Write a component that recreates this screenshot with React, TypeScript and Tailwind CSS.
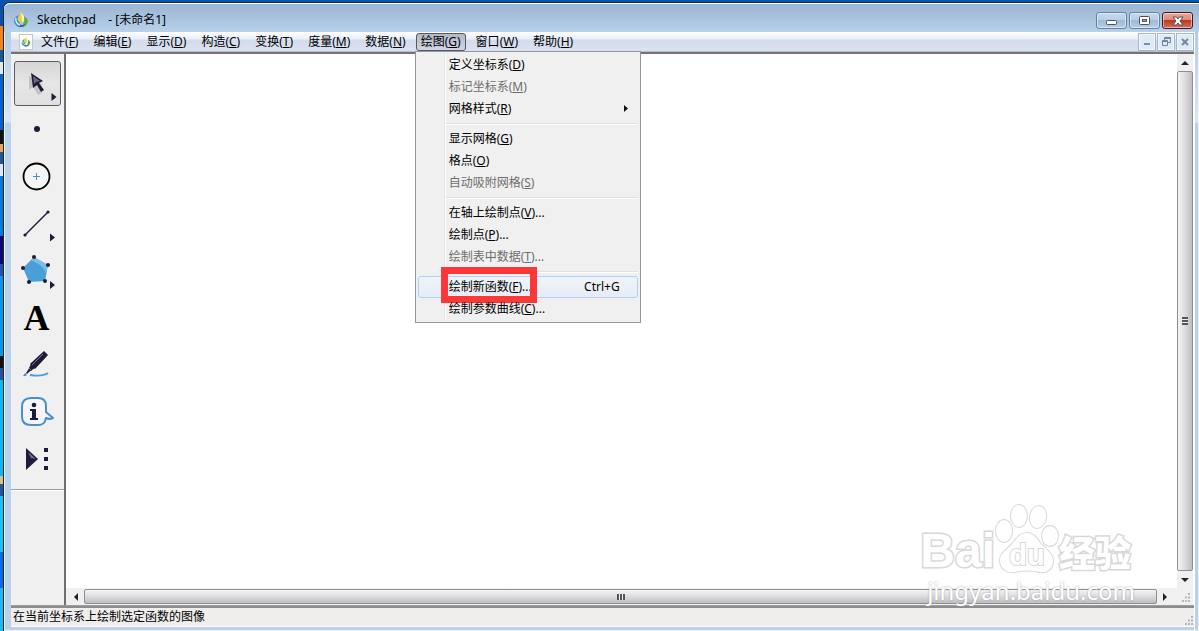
import type { ReactNode } from "react";

interface MenuEntry {
  label: string;
  hotkey: string;
  more?: boolean;
  disabled?: boolean;
  submenu?: boolean;
  shortcut?: string;
  marked?: boolean;
}

const menus = [
  ["文件", "F"],
  ["编辑", "E"],
  ["显示", "D"],
  ["构造", "C"],
  ["变换", "T"],
  ["度量", "M"],
  ["数据", "N"],
  ["绘图", "G"],
  ["窗口", "W"],
  ["帮助", "H"],
];

const graphMenu: MenuEntry[][] = [
  [
    { label: "定义坐标系", hotkey: "D" },
    { label: "标记坐标系", hotkey: "M", disabled: true },
    { label: "网格样式", hotkey: "R", submenu: true },
  ],
  [
    { label: "显示网格", hotkey: "G" },
    { label: "格点", hotkey: "O" },
    { label: "自动吸附网格", hotkey: "S", disabled: true },
  ],
  [
    { label: "在轴上绘制点", hotkey: "V", more: true },
    { label: "绘制点", hotkey: "P", more: true },
    { label: "绘制表中数据", hotkey: "T", more: true, disabled: true },
  ],
  [
    {
      label: "绘制新函数",
      hotkey: "F",
      more: true,
      shortcut: "Ctrl+G",
      marked: true,
    },
    { label: "绘制参数曲线", hotkey: "C", more: true },
  ],
];

// slivers of the desktop that show left of the window
const desktop = [
  "h-[26px] bg-[#0a50a8]",
  "h-6 bg-[#f58220]",
  "h-3 bg-[#1c5799]",
  "h-3 bg-[#dfe9f5]",
  "h-14 bg-[#0b60c8]",
  "h-[14px] bg-[#101010]",
  "h-2 bg-[#e8a35c]",
  "h-3 bg-[#22559c]",
  "h-3 bg-[#dfe9f5]",
  "h-[60px] bg-[#0879dc]",
  "h-7 bg-[#0a0a6e]",
  "h-3 bg-[#22559c]",
  "h-20 bg-[#0a95ea]",
  "h-3 bg-[#101010]",
  "h-3 bg-[#22559c]",
  "h-24 bg-[#12b4f2]",
  "h-2 bg-[#d9c08a]",
  "h-3 bg-[#22559c]",
  "h-14 bg-[#20c0f5]",
  "h-9 bg-[#0868f0]",
  "flex-1 bg-[#20b8f2]",
];

function Logo({ className }: { className: string }) {
  return (
    <svg viewBox="0 0 16 16" className={className} aria-hidden="true">
      <path d="M6 3C3 4 1 6 1 9c0 3 3 6 7 6L6 9z" fill="#3d8fc4" />
      <path d="M8 0C6 4 4 5 5 8c1 2 3 3 5 2 0-4 0-7-2-10z" fill="#e9cf4a" />
      <path d="M8 0c3 4 4 6 3 9l-2 1C9 7 9 4 8 0z" fill="#fff8b8" />
      <path d="M11 4c3 2 4 4 4 6-1 3-4 5-7 5 2-2 4-5 3-11z" fill="#62a84f" />
      <path d="M4 10c2 3 6 4 9 2-1 2-3 3-5 3-3 0-4-2-4-5z" fill="#2467a8" />
      <path d="M3 6c-1 3 1 6 4 7" stroke="#cdeef8" strokeWidth="1.500" fill="none" />
    </svg>
  );
}

function Hotkey({ entry }: { entry: MenuEntry }) {
  return (
    <span>
      {entry.label}(<u>{entry.hotkey}</u>){entry.more && "..."}
    </span>
  );
}

function MenuRow({ entry }: { entry: MenuEntry }) {
  const state = entry.marked
    ? "border-[#aecff7] bg-linear-to-b from-[#f0f3f8] to-[#e6ecf5]"
    : "border-transparent";
  return (
    <li role="none" className="relative">
      <button
        role="menuitem"
        disabled={entry.disabled}
        className={`flex h-[22px] w-full items-center justify-between rounded-[3px] border pr-[17px] pl-[30px] text-left disabled:text-[#6d6d6d] ${state}`}
      >
        <Hotkey entry={entry} />
        {entry.shortcut && <span>{entry.shortcut}</span>}
        {entry.submenu && (
          <svg viewBox="0 0 4 7" className="-mr-2 h-[7px] w-1">
            <path d="M0 0l4 3.500-4 3.500z" fill="#111" />
          </svg>
        )}
      </button>
      {entry.marked && (
        <span className="pointer-events-none absolute -top-[9px] left-[23px] h-9 w-24 border-[7px] border-[#fb3737]" />
      )}
    </li>
  );
}

function GraphMenu() {
  return (
    <div
      role="menu"
      aria-label="绘图"
      className="absolute top-full -left-px z-20 w-[226px] border border-[#979797] bg-[#f0f0f0] p-0.5"
    >
      <span className="absolute inset-y-0.5 left-7 w-0.5 border-l border-[#e2e3e3] bg-white" />
      {graphMenu.map((group, i) => (
        <ul
          key={i}
          role="group"
          className={
            i > 0
              ? "relative pt-2 before:absolute before:top-[3px] before:right-0 before:left-7 before:h-0.5 before:border-t before:border-[#e0e0e0] before:bg-white"
              : "relative"
          }
        >
          {group.map((entry) => (
            <MenuRow key={entry.label} entry={entry} />
          ))}
        </ul>
      ))}
    </div>
  );
}

function CaptionButton({
  label,
  danger,
  children,
}: {
  label: string;
  danger?: boolean;
  children: ReactNode;
}) {
  const look = danger
    ? "border-[#4d1220] bg-[linear-gradient(#e9a99d,#dc8a7a_45%,#b93a22_50%,#d0705a)]"
    : "border-[#66809f] bg-[linear-gradient(#c5d8eb,#b8cfe6_45%,#9dbad6_50%,#b4cfe8)]";
  return (
    <button
      aria-label={label}
      className={`flex h-[17px] w-[31px] items-center justify-center rounded-[3px] border inset-ring inset-ring-white/50 ${look}`}
    >
      {children}
    </button>
  );
}

function ChildButton({
  label,
  children,
}: {
  label: string;
  children: ReactNode;
}) {
  return (
    <button
      aria-label={label}
      className="flex h-[18px] w-[18px] items-center justify-center border border-[#a5b4c6] bg-[#dfeaf7] inset-ring inset-ring-white/60"
    >
      {children}
    </button>
  );
}

function Cross({ className, fill }: { className: string; fill: string }) {
  return (
    <svg viewBox="0 0 12 10" className={className}>
      <path
        d="M1 1h3.500l1.500 2 1.500-2H11L8 5l3 4H7.500L6 7 4.500 9H1l3-4z"
        fill={fill}
        stroke="#50505f"
      />
    </svg>
  );
}

const tools: { name: string; art: ReactNode }[] = [
  {
    name: "移动箭头工具",
    art: (
      <>
        <path d="M15 15v14l4-3 5 8 4-2-4-7 5-1z" fill="#000" opacity=".15" />
        <path d="M17 12l2 15 4-3 4 7 3-2-5-7 4-2z" fill="#201a3a" />
        <path d="M19 15l7 5-4 1-2 2z" fill="#6b6680" />
        <path d="M37.500 32l5 4-5 4z" fill="#201a3a" />
      </>
    ),
  },
  { name: "点工具", art: <circle cx="23" cy="21" r="3" fill="#201a3a" /> },
  {
    name: "圆工具",
    art: (
      <>
        <circle cx="22.500" cy="21.500" r="13" fill="#f5f5f5" stroke="#000" strokeWidth="1.800" />
        <path d="M22.500 18v7M19 21.500h7" stroke="#3c92cf" />
      </>
    ),
  },
  {
    name: "线段直尺工具",
    art: (
      <>
        <path d="M11 33L34 10" stroke="#201a3a" strokeWidth="1.400" />
        <circle cx="11" cy="33" r="1.600" fill="#201a3a" />
        <circle cx="34" cy="10" r="1.600" fill="#201a3a" />
        <path d="M36 31.500l5 4-5 4z" fill="#201a3a" />
      </>
    ),
  },
  {
    name: "多边形工具",
    art: (
      <>
        <path d="M20 8l14 8-3 16-16 1L9 19z" fill="#4a9fd6" />
        <path d="M20 8l14 8-2 8c-2-6-7-9-15-13z" fill="#9bd0f0" opacity=".6" />
        <g fill="#201a3a">
          <circle cx="20" cy="8" r="2" />
          <circle cx="34" cy="16" r="2" />
          <circle cx="31" cy="32" r="2" />
          <circle cx="15" cy="33" r="2" />
          <circle cx="9" cy="19" r="2" />
          <path d="M36 32l5 4-5 4z" />
        </g>
      </>
    ),
  },
  {
    name: "文本工具",
    art: null,
  },
  {
    name: "标记工具",
    art: (
      <>
        <path d="M30 9l3 3-12 13-6 4-2 2-1-1 2-3 3-6z" fill="#201a3a" />
        <path d="M30 9l3 3-12 13-4-4z" fill="#201a3a" stroke="#201a3a" strokeWidth="1.500" />
        <path d="M29 11L18 22M15 25l3 3" stroke="#7d7891" />
        <path d="M9 33l2-3 2 2c-1 1-2 1-4 1z" fill="#3c92cf" />
        <path d="M16 32c7 1 14 1 18-2" fill="none" stroke="#4a9fd6" strokeWidth="1.800" />
      </>
    ),
  },
  {
    name: "信息工具",
    art: (
      <>
        <path
          d="M17 8h7c6 0 8 3 8 8v6l7 6c-2 1-5 1-7 0-1 5-3 7-8 7h-7c-6 0-9-3-9-8V17c0-6 3-9 9-9z"
          fill="#f5f5f5"
          stroke="#4590cd"
          strokeWidth="2"
          strokeLinejoin="round"
        />
        <circle cx="20" cy="15" r="2.300" fill="#201a3a" />
        <path d="M16 19h6v9h2v2h-8v-2h2v-7h-2z" fill="#201a3a" />
      </>
    ),
  },
  {
    name: "自定义工具",
    art: (
      <>
        <path d="M12 11l12 11-12 11z" fill="#201a3a" />
        <path d="M14 15l8 7-5-1z" fill="#77718a" />
        <path d="M30 11h4v4h-4zM30 20h4v4h-4zM30 29h4v4h-4z" fill="#201a3a" />
      </>
    ),
  },
];

function Toolbox() {
  return (
    <aside className="w-[55px] shrink-0 border-r-2 border-[#6f6f6f] bg-[#f0f0f0]">
      <div className="flex flex-col gap-0.5 border-b border-[#9d9d9d] px-[3px] py-[7px] shadow-[0_1px_0_#ffffff]">
        {tools.map((tool, i) => (
          <button
            key={tool.name}
            aria-label={tool.name}
            className={`flex h-[45px] w-[47px] items-center justify-center rounded-[3px] border ${
              i === 0
                ? "border-[#5c5c5c] bg-linear-to-b from-[#d6d6d6] via-[#e6e6e6] to-[#e0e0e0]"
                : "border-transparent"
            }`}
          >
            {tool.art ? (
              <svg viewBox="1 1 45 43" fill="none" className="h-[43px] w-[45px]">
                {tool.art}
              </svg>
            ) : (
              <span className="pr-0.5 pb-0.5 font-['Liberation_Serif',serif] text-[36px] leading-none font-bold text-black">
                A
              </span>
            )}
          </button>
        ))}
      </div>
    </aside>
  );
}

function Arrow({ d, label }: { d: string; label: string }) {
  return (
    <button
      aria-label={label}
      className="flex h-[17px] w-4 shrink-0 items-center justify-center"
    >
      <svg viewBox="0 0 8 8" className="h-2 w-2">
        <path d={d} fill="#222" />
      </svg>
    </button>
  );
}

function Grip() {
  return (
    <svg viewBox="0 0 10 10" className="h-2.5 w-2.5" aria-hidden="true">
      <path
        d="M7 0h2v2H7zM4 3.500h2v2H4zM7 3.500h2v2H7zM1 7h2v2H1zM4 7h2v2H4zM7 7h2v2H7z"
        fill="#b8b8b8"
      />
    </svg>
  );
}

function Watermark() {
  return (
    <div className="pointer-events-none absolute right-16 bottom-6 z-10 flex flex-col items-end">
      <div className="flex items-end pr-1 text-white [-webkit-text-stroke:3px_#d8d8d8] [paint-order:stroke]">
        <span className="font-['Liberation_Sans',sans-serif] text-[48px] leading-[48px] font-bold">
          Bai
        </span>
        <svg viewBox="0 0 64 72" className="h-[72px] w-16">
          <g fill="#fff" stroke="#d8d8d8" strokeWidth="2">
            <ellipse cx="9" cy="28" rx="8" ry="11" />
            <ellipse cx="24" cy="13" rx="8" ry="11" />
            <ellipse cx="43" cy="14" rx="8" ry="11" transform="rotate(10 43 14)" />
            <ellipse cx="55" cy="33" rx="8" ry="10" />
            <path d="M32 30c7 0 10 6 14 11 6 6 13 11 12 18-1 8-7 11-13 10-9-2-17-2-25 0-8 1-15-3-15-12 0-7 8-11 13-17 4-5 7-10 14-10z" />
            <text
              x="32"
              y="62"
              textAnchor="middle"
              fontFamily="Liberation Sans"
              fontSize="29"
              fontWeight="700"
            >
              du
            </text>
          </g>
        </svg>
        <span className="text-[36px] leading-[42px] font-black">经验</span>
      </div>
      <span className="text-[24px] leading-8 text-white [text-shadow:0_0_2px_#999]">
        jingyan.baidu.com
      </span>
    </div>
  );
}

export default function App() {
  return (
    <div className="relative flex min-h-screen bg-[#0a55ad] font-['Noto_Sans','Noto_Sans_CJK_SC',sans-serif] text-xs text-black">
      <div className="flex w-[3px] shrink-0 flex-col">
        {desktop.map((c, i) => (
          <span key={i} className={c} />
        ))}
      </div>
      <div className="mt-0.5 flex min-w-0 flex-1 flex-col rounded-tl-[7px] border-t border-l border-[#1d2733] bg-[linear-gradient(#a9c3df_0px,#dbe8f5_119px,#b9d1ea_120px)] inset-ring inset-ring-white/70">
        <header className="flex h-[29px] items-start justify-between rounded-tl-[6px] bg-linear-to-b from-[#98b4d2] to-[#b9d1ea] pl-[9px] inset-shadow-[0_1px_0_#ffffff]">
          <div className="flex items-center gap-2 pt-[9px]">
            <Logo className="h-4 w-4" />
            <h1 className="whitespace-pre">Sketchpad    - [未命名1]</h1>
          </div>
          <div className="flex gap-0.5 pt-[9px] pr-1.5">
            <CaptionButton label="最小化">
              <svg viewBox="0 0 12 6" className="mt-1 h-1.5 w-3">
                <rect x=".5" y=".5" width="10" height="4" rx="1" fill="#fff" stroke="#50505f" />
              </svg>
            </CaptionButton>
            <CaptionButton label="最大化">
              <svg viewBox="0 0 12 10" className="h-2.5 w-3">
                <rect x=".5" y=".5" width="10" height="8" rx="1" fill="#fff" stroke="#50505f" />
                <rect x="3.500" y="3.500" width="4" height="2" fill="#8fb0d0" stroke="#50505f" />
              </svg>
            </CaptionButton>
            <CaptionButton label="关闭" danger>
              <Cross className="h-2.5 w-3" fill="#fff" />
            </CaptionButton>
          </div>
        </header>

        <div className="mr-1 ml-[7px] flex flex-1 flex-col border-r border-white">
          <nav
            aria-label="菜单"
            className="flex h-5 items-center justify-between border-b border-[#b6bccc] bg-[linear-gradient(#ffffff,#eaeef8_35%,#d4dbed_45%,#dce1f2)]"
          >
            <div className="flex items-center">
              <span className="mr-[3px] ml-2 flex h-4 w-[14px] items-center justify-center border border-[#c6c6c6] bg-white">
                <Logo className="h-2.5 w-2.5" />
              </span>
              <ul className="flex gap-[5px]">
                {menus.map(([label, hotkey]) => {
                  const open = hotkey === "G";
                  return (
                    <li key={hotkey} className="relative">
                      <button
                        aria-expanded={open}
                        className={`block h-[18px] rounded-[3px] border px-1 leading-4 ${
                          open
                            ? "border-[#555a66] bg-linear-to-b from-[#b4b8c6] to-[#d2d6e4]"
                            : "border-transparent"
                        }`}
                      >
                        {label}(<u>{hotkey}</u>)
                      </button>
                      {open && <GraphMenu />}
                    </li>
                  );
                })}
              </ul>
            </div>
            <div className="flex gap-px">
              <ChildButton label="最小化文档">
                <span className="mt-1 h-0.5 w-1.5 bg-[#7c8ea2]" />
              </ChildButton>
              <ChildButton label="还原文档">
                <svg viewBox="0 0 9 9" className="h-[9px] w-[9px]" fill="none" stroke="#74879c">
                  <path d="M2.500 3V.5h6v5H6M3 1.500h5M.5 3.500h5v5h-5zM1 4.500h4" />
                </svg>
              </ChildButton>
              <ChildButton label="关闭文档">
                <svg viewBox="0 0 8 8" className="h-2 w-2">
                  <path d="M1 1l6 6M7 1L1 7" stroke="#74879c" strokeWidth="2" />
                </svg>
              </ChildButton>
            </div>
          </nav>

          <div className="flex flex-1 border-t-2 border-b border-t-[#747474] border-b-[#9d9d9d] bg-white">
            <Toolbox />
            <div className="flex min-w-0 flex-1 flex-col pr-px">
              <div className="flex flex-1">
                <main className="flex-1 bg-white" />
                <div className="flex w-4 flex-col bg-[#f0f0f0]">
                  <Arrow d="M0 6l4-4 4 4z" label="向上滚动" />
                  <div className="flex flex-1 flex-col items-center justify-center rounded-[2px] border border-[#8f8f8f] bg-linear-to-r from-[#f4f4f4] via-[#dcdce0] to-[#bcbcc2]">
                    <span className="h-2 w-1.5 bg-[repeating-linear-gradient(#555_0_2px,#eee_2px_3px)]" />
                  </div>
                  <Arrow d="M0 2l4 4 4-4z" label="向下滚动" />
                </div>
              </div>
              <div className="flex h-[17px] items-center bg-[#f0f0f0] pl-0.5">
                <Arrow d="M6 0v8L2 4z" label="向左滚动" />
                <div className="flex h-[15px] flex-1 items-center justify-center rounded-[2px] border border-[#8f8f8f] bg-linear-to-b from-[#f4f4f4] via-[#dcdce0] to-[#bcbcc2]">
                  <span className="h-1.5 w-2 bg-[repeating-linear-gradient(90deg,#555_0_2px,#eee_2px_3px)]" />
                </div>
                <Arrow d="M2 0v8l4-4z" label="向右滚动" />
                <span className="flex h-full w-5 items-end justify-end p-0.5">
                  <Grip />
                </span>
              </div>
            </div>
          </div>

          <footer className="mb-1 flex h-[21px] items-center justify-between border-t-2 border-b border-t-[#8c8c8c] border-b-white bg-[#f0eded] pl-0.5">
            <span>在当前坐标系上绘制选定函数的图像</span>
            <span className="self-end">
              <Grip />
            </span>
          </footer>
        </div>
        <Watermark />
      </div>
    </div>
  );
}
